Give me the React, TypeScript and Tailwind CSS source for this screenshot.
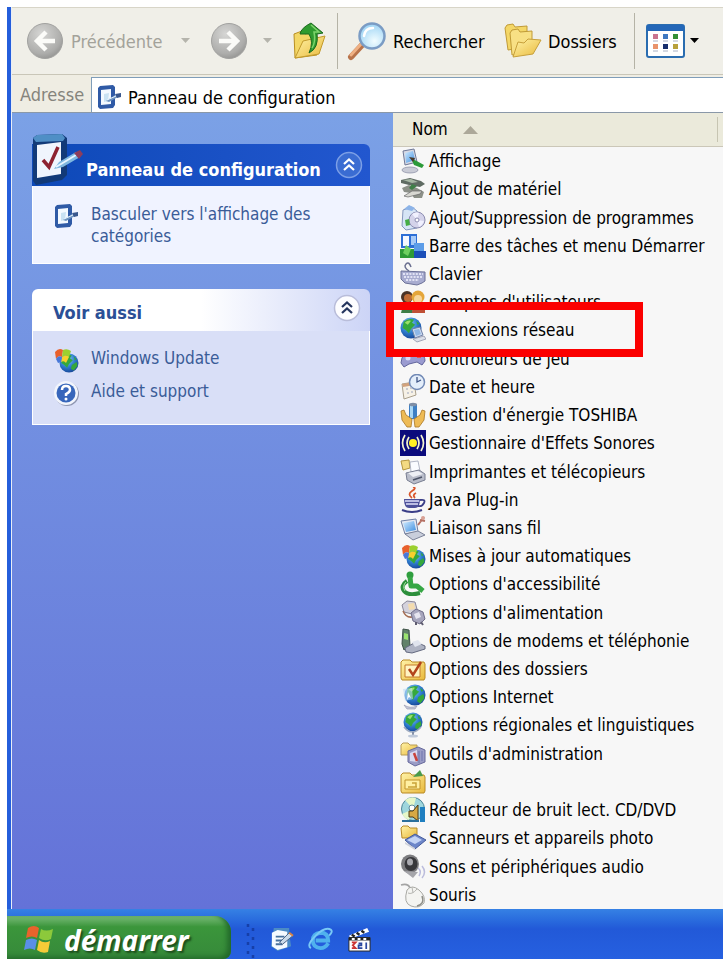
import type { ReactNode } from "react";

const Svg = ({ children, className = "size-[26px]", box = "0 0 26 26" }: { children: ReactNode; className?: string; box?: string }) => (
  <svg viewBox={box} className={`shrink-0 ${className}`} aria-hidden="true">
    {children}
  </svg>
);

/* ---- Shared drawing parts ---- */

const Defs = () => (
  <svg className="absolute size-0" aria-hidden="true">
    <defs>
      <radialGradient id="ocean" cx="0.4" cy="0.3" r="0.8">
        <stop offset="0" stopColor="#8fd0f5" />
        <stop offset="0.5" stopColor="#2f7fd0" />
        <stop offset="1" stopColor="#123a8c" />
      </radialGradient>
      <linearGradient id="folder" x1="0" y1="0" x2="1" y2="1">
        <stop offset="0" stopColor="#fff3a8" />
        <stop offset="1" stopColor="#e9b93c" />
      </linearGradient>
      <radialGradient id="grayBall" cx="0.4" cy="0.3" r="0.8">
        <stop offset="0" stopColor="#d6d6d4" />
        <stop offset="0.7" stopColor="#adadab" />
        <stop offset="1" stopColor="#8c8c8a" />
      </radialGradient>
      <linearGradient id="screen" x1="0" y1="0" x2="1" y2="1">
        <stop offset="0" stopColor="#d3ecff" />
        <stop offset="1" stopColor="#3f8fe0" />
      </linearGradient>
      <radialGradient id="lens" cx="0.6" cy="0.7" r="0.7">
        <stop offset="0" stopColor="#f2fdff" />
        <stop offset="1" stopColor="#9ed4f5" />
      </radialGradient>
    </defs>
  </svg>
);

const Globe = ({ cx, cy, r }: { cx: number; cy: number; r: number }) => (
  <g transform={`translate(${cx} ${cy}) scale(${r / 10})`}>
    <circle r="10" fill="url(#ocean)" />
    <path d="M-7-6Q-2-10 3-8L1-5 4-3 0 1-2 5-5 2-8 0ZM3 2L8-1 9 3 5 8 2 6ZM5-7L8-4 6-3Z" fill="#35a83c" />
    <path d="M-6-5Q-3-8 0-7L-3-3Z" fill="#9be06a" />
  </g>
);

const Flag = () => (
  <g>
    <path d="M2 5Q6 0 10 3L9 10Q5 8 3 12Z" fill="#e8602c" />
    <path d="M10 3Q14 1 18 4L16 10Q13 7 9 10Z" fill="#9bd02f" />
    <path d="M9 10Q13 7 16 10L13 16Q11 13 8 15Z" fill="#f7cf2d" />
    <path d="M3 12Q5 8 9 10L8 15 5 16Z" fill="#4878d8" />
  </g>
);

const Panel = () => (
  <g>
    <path d="M2 4L4 2 17 1 19 3V21L17 24 4 25 2 23Z" fill="#2f5aa6" />
    <path d="M5 6L15 5V20L5 21Z" fill="#f3f9ff" />
    <path d="M8 10L13 9 12 17 8 18Z" fill="#c9e2f3" />
    <path d="M10 17L19 11 22 13 13 18Z" fill="#6d93bf" />
    <path d="M19 10L25 9 25 13 21 14Z" fill="#39578d" />
    <path d="M11 16L20 12" stroke="#e7f3ff" strokeWidth="1" />
  </g>
);

const FolderShape = () => (
  <path d="M1 6L3 4H10L12 6H24L25 8V22L24 24H2L1 22Z" fill="url(#folder)" stroke="#b98a25" />
);

/* ---- Control panel item icons ---- */

const icons: Record<string, ReactNode> = {
  display: (
    <>
      <ellipse cx="10" cy="22" rx="8" ry="3" fill="#c9cbd6" stroke="#858aa0" strokeWidth=".7" />
      <path d="M3 3L14 1 17 14 5 17Z" fill="#d7d9e4" stroke="#6f7896" />
      <path d="M5 5L13 3 15 12 6 15Z" fill="url(#screen)" />
      <path d="M11 10L24 17 22 20 14 17Z" fill="#2b9a38" />
      <path d="M9 9L15 10 13 14Z" fill="#4b3a2a" />
    </>
  ),
  hardware: (
    <>
      <path d="M1 4L10 2 21 5 25 8 20 11 9 9 1 7Z" fill="#5f6b63" />
      <path d="M3 4L11 3 18 6 12 7Z" fill="#a7b8a5" />
      <path d="M2 12L9 9 17 12 24 16 22 22 14 22 11 17 4 16Z" fill="#8c9088" />
      <path d="M4 20L12 15 22 15 20 18 8 21Z" fill="#d8d8d2" stroke="#666" strokeWidth=".7" />
      <path d="M12 8L17 10 12 14 9 12Z" fill="#3f7f48" />
    </>
  ),
  programs: (
    <>
      <path d="M3 5L12 2 17 6V23L6 25 2 21Z" fill="#d6e5f6" stroke="#8597bd" />
      <path d="M4 4L9 0 15 3 12 6Z" fill="#8db4e8" />
      <circle cx="17" cy="15" r="8" fill="#d4d3ea" stroke="#8c8cb0" />
      <path d="M17 15L12 9Q16 6 19 8ZM17 15L24 16Q22 21 19 22Z" fill="#f1f1ff" />
      <circle cx="17" cy="15" r="2" fill="#fff" stroke="#8c8cb0" />
      <path d="M5 15L9 14 10 20 6 21Z" fill="#46ad45" />
    </>
  ),
  taskbar: (
    <>
      <path d="M1 1H17V15H1Z" fill="#2d6fd6" />
      <path d="M3 3H9V13H3Z" fill="#f4f8ff" />
      <path d="M11 3H16V12H11Z" fill="#a8cbf7" />
      <path d="M14 10H24V19H14Z" fill="#5d9de8" />
      <path d="M0 16H14V25H0Z" fill="#2f9a37" />
      <path d="M14 18H26V25H14Z" fill="#1c4fb8" />
      <path d="M6 12L11 16 8 23 3 20Z" fill="#6ed060" />
    </>
  ),
  keyboard: (
    <>
      <path d="M9 10Q3 6 6 3T11 6" fill="none" stroke="#6b7090" strokeWidth="1.5" />
      <path d="M1 10L25 11V20L22 22 17 24 5 22 1 18Z" fill="#a8acd0" stroke="#6c7198" />
      <path d="M3 13H23M4 16H22M6 19H19" stroke="#f3f4ff" strokeWidth="1.6" strokeDasharray="2 1.2" />
    </>
  ),
  users: (
    <>
      <circle cx="7" cy="8" r="6" fill="#4b3326" />
      <circle cx="8" cy="9" r="4" fill="#c06c36" />
      <circle cx="18" cy="8" r="6.500" fill="#e5a63a" />
      <circle cx="18" cy="10" r="4" fill="#f8d69b" />
      <path d="M1 24Q2 14 12 15L13 24Z" fill="#3e7d45" />
      <path d="M12 24Q12 15 19 15T25 24Z" fill="#bf4f35" />
    </>
  ),
  network: (
    <>
      <Globe cx={11} cy={11} r={10.5} />
      <path d="M12 12L20 10 23 18 15 21Z" fill="#cbd8ee" stroke="#6d80a8" />
      <path d="M14 13L19 12 21 17 16 19Z" fill="#8fb7e6" />
      <path d="M13 22L24 19 26 22 17 25Z" fill="#dcdfe9" stroke="#8489a0" strokeWidth=".7" />
    </>
  ),
  games: (
    <>
      <path d="M2 12Q4 7 10 9L20 8Q25 9 25 15L22 19 17 16 9 18 4 21 1 17Z" fill="#9a9bd0" stroke="#62659c" />
      <circle cx="8" cy="12" r="2.500" fill="#dadbf5" />
      <path d="M17 11H21" stroke="#e5564a" strokeWidth="2" />
    </>
  ),
  clock: (
    <>
      <path d="M2 10L14 8 16 21 4 25Z" fill="#f6f1e6" stroke="#aaa08c" />
      <path d="M2 10L14 8 15 11 3 13Z" fill="#d2a27c" />
      <circle cx="17" cy="8" r="7.500" fill="#e4eefa" stroke="#7189b5" strokeWidth="1.500" />
      <path d="M17 3V8L21 6" fill="none" stroke="#3d5485" strokeWidth="1.300" />
      <path d="M6 15H8M10 14H12M7 19H9M11 18H13" stroke="#b9bdca" strokeWidth="1.500" />
    </>
  ),
  toshiba: (
    <>
      <path d="M9 2H17V17H9Z" fill="#3d7fc4" />
      <path d="M10 3H13V16H10Z" fill="#a9d8f6" />
      <ellipse cx="13" cy="2.500" rx="4" ry="1.800" fill="#7f8ea5" />
      <path d="M1 9L4 8 6 13 12 17 11 25H7L2 18Z" fill="#eebb55" stroke="#a97724" strokeWidth=".8" />
      <path d="M25 9L22 8 20 13 14 17 15 25H19L24 18Z" fill="#eebb55" stroke="#a97724" strokeWidth=".8" />
    </>
  ),
  sound: (
    <>
      <path d="M0 0H26V26H0Z" fill="#0b0b7c" />
      <circle cx="13" cy="13" r="4" fill="#ffee22" />
      <path d="M9 7Q5 13 9 19M17 7Q21 13 17 19M5 5Q0 13 5 21M21 5Q26 13 21 21" fill="none" stroke="#f4f4d0" strokeWidth="1.700" />
    </>
  ),
  printer: (
    <>
      <path d="M1 2L9 1 10 9 3 11Z" fill="#f3da83" stroke="#b5963f" />
      <path d="M10 3L18 2 20 12 11 13Z" fill="#fafcff" stroke="#a0a6b8" strokeWidth=".8" />
      <path d="M6 14L19 11 25 15V21L14 25 7 21Z" fill="#b9bdca" stroke="#797f92" />
      <path d="M8 14L18 12 23 15 13 18Z" fill="#eef0f5" />
      <path d="M13 21L22 18" stroke="#4b5367" strokeWidth="1.500" />
    </>
  ),
  java: (
    <>
      <path d="M12 11Q7 7 12 4T13 0M15 11Q12 8 16 6" fill="none" stroke="#d9562b" strokeWidth="1.800" />
      <path d="M4 12H20Q20 21 15 21H9Q4 21 4 12Z" fill="#4d519a" />
      <path d="M5 14H19M6 17H18" stroke="#dfe1fa" strokeWidth="1.300" />
      <path d="M20 13Q26 12 24 16T18 19" fill="none" stroke="#3b3f88" strokeWidth="1.800" />
      <path d="M2 23Q12 27 22 23" fill="none" stroke="#3b3f88" strokeWidth="2" />
    </>
  ),
  wireless: (
    <>
      <path d="M1 6L16 4 18 17 5 19Z" fill="#e4e8f2" stroke="#7080a4" />
      <path d="M3 8L14 6 16 15 6 17Z" fill="url(#screen)" />
      <path d="M5 19L18 16 25 20 13 25Z" fill="#c9cedb" stroke="#7b8298" />
      <path d="M18 10L24 2M20 5L25 6" stroke="#b46f62" strokeWidth="2" />
      <circle cx="23" cy="3" r="2" fill="#d9a296" />
    </>
  ),
  update: (
    <>
      <Globe cx={16} cy={16} r={9.5} />
      <Flag />
    </>
  ),
  access: (
    <>
      <circle cx="10" cy="4" r="3.500" fill="#2f9e3f" />
      <path d="M10 6L11 15H17L23 20" fill="none" stroke="#37a745" strokeWidth="5" strokeLinejoin="round" />
      <path d="M7 10Q0 15 4 20T20 22" fill="none" stroke="#2c8f3b" strokeWidth="4" />
      <path d="M6 11Q2 15 5 20" fill="none" stroke="#a4e59f" strokeWidth="1" />
    </>
  ),
  power: (
    <>
      <path d="M2 5L7 1 15 2 17 9 12 14 4 12Z" fill="#d4d2dc" stroke="#8a8798" />
      <path d="M8 4L14 3 15 9 9 10Z" fill="#f4dcae" />
      <path d="M3 11Q6 18 12 17" fill="none" stroke="#a56d52" strokeWidth="1.500" />
      <path d="M11 13L16 9 23 12 25 19 20 24 13 21Z" fill="#a7a6bd" stroke="#6f6d89" />
      <path d="M14 14L19 12 21 17 16 19Z" fill="#e6e5f0" />
      <path d="M16 22V25M21 22L23 25" stroke="#5e5c70" strokeWidth="2" />
    </>
  ),
  modem: (
    <>
      <path d="M3 1L9 2 10 18 4 22 2 16Z" fill="#62826a" stroke="#3d5146" />
      <path d="M4 5L8 6V12L4 11Z" fill="#9be36f" />
      <path d="M5 20L16 14 25 18V21L12 25 6 24Z" fill="#aeb3c3" stroke="#646a80" />
      <path d="M12 14L18 12 22 16 15 19Z" fill="#e0e4ee" />
    </>
  ),
  folderOptions: (
    <>
      <FolderShape />
      <path d="M5 9H20V21H5Z" fill="#fff4c2" stroke="#c47b2a" />
      <path d="M9 13L13 19 21 6" fill="none" stroke="#b3441c" strokeWidth="2.500" />
    </>
  ),
  internet: (
    <>
      <Globe cx={15} cy={11} r={10.5} />
      <path d="M3 5L12 4 13 15 5 17Z" fill="#bcdcf7" opacity=".6" />
      <path d="M8 8L11 14 9 13 7 16Z" fill="#fff" />
      <path d="M4 21Q10 25 17 22L15 25 7 25Z" fill="#c6c9da" stroke="#8e92aa" strokeWidth=".6" />
    </>
  ),
  regional: (
    <>
      <Globe cx={13} cy={10} r={9.5} />
      <path d="M4 15Q12 25 21 15" fill="none" stroke="#9ba9c0" strokeWidth="1.500" />
      <path d="M13 20V23" stroke="#8491a9" strokeWidth="2" />
      <ellipse cx="13" cy="24" rx="5" ry="1.500" fill="#bfc9d9" />
    </>
  ),
  admin: (
    <>
      <path d="M1 4L3 2H8L10 4H17V14H1Z" fill="url(#folder)" stroke="#b79b55" />
      <path d="M8 10L18 6 25 9V21L15 25 8 21Z" fill="#9a9cc6" stroke="#66699b" />
      <path d="M10 12L17 9V21L10 20Z" fill="#d9daf1" />
      <path d="M14 12L17 20" stroke="#c8443d" strokeWidth="2.500" />
      <path d="M19 10V22M22 10V20" stroke="#6f75ad" />
    </>
  ),
  fonts: (
    <>
      <FolderShape />
      <path d="M13 8L20 1 23 7Z" fill="#4a9a4b" />
      <path d="M5 11H20V20H5Z" fill="#fff0a2" stroke="#c1942a" />
      <path d="M8 18H17M12 14H16V18" fill="none" stroke="#c9a238" strokeWidth="1.500" />
    </>
  ),
  cd: (
    <>
      <circle cx="13" cy="12" r="11.500" fill="#9ed6dd" stroke="#4f8798" />
      <path d="M13 12L5 3Q11-1 16 1ZM13 12L2 17Q5 22 9 23Z" fill="#e6f7c8" />
      <circle cx="12" cy="11" r="3" fill="#fff" stroke="#5e8b9c" />
      <path d="M9 14L13 14 18 8V24L13 20H9Z" fill="#d7a944" stroke="#4b3a18" />
      <path d="M20 10H25V25H20Z" fill="#1f7fc0" />
      <path d="M2 24H19" stroke="#2b6f9c" strokeWidth="2" />
    </>
  ),
  scanner: (
    <>
      <path d="M1 3L3 1H8L10 3H17V13H2Z" fill="url(#folder)" stroke="#b98a25" />
      <path d="M5 15L15 9 26 15 15 24Z" fill="#6d86c9" stroke="#445b9c" />
      <path d="M7 15L15 11 22 15 15 19Z" fill="#c4d4f5" />
      <path d="M5 17L15 23V25L5 19Z" fill="#cfd2dc" />
    </>
  ),
  speaker: (
    <>
      <ellipse cx="10" cy="10" rx="9" ry="9.500" fill="#7d7d80" />
      <ellipse cx="11" cy="10" rx="6.500" ry="7" fill="#37373b" />
      <ellipse cx="10" cy="8" rx="3" ry="3.500" fill="#aaaab0" />
      <path d="M4 17L13 24 18 18Z" fill="#a5a5aa" />
      <path d="M18 14Q22 17 19 22M22 12Q27 18 22 24" fill="none" stroke="#bbbcdc" strokeWidth="1.500" />
    </>
  ),
  mouse: (
    <>
      <path d="M10 6Q8 1 1 3" fill="none" stroke="#a4a4a4" strokeWidth="1.800" />
      <path d="M7 8Q12 2 19 8T24 21Q19 27 11 24T7 8Z" fill="#f4f4f1" stroke="#a9a9a4" />
      <path d="M8 11Q12 13 17 7M12 5L13 11" fill="none" stroke="#b6b6b2" />
      <path d="M22 14Q25 22 17 24" fill="none" stroke="#8d8d87" strokeWidth="1.500" />
    </>
  ),
};

const items: [string, string][] = [
  ["display", "Affichage"],
  ["hardware", "Ajout de matériel"],
  ["programs", "Ajout/Suppression de programmes"],
  ["taskbar", "Barre des tâches et menu Démarrer"],
  ["keyboard", "Clavier"],
  ["users", "Comptes d'utilisateurs"],
  ["network", "Connexions réseau"],
  ["games", "Contrôleurs de jeu"],
  ["clock", "Date et heure"],
  ["toshiba", "Gestion d'énergie TOSHIBA"],
  ["sound", "Gestionnaire d'Effets Sonores"],
  ["printer", "Imprimantes et télécopieurs"],
  ["java", "Java Plug-in"],
  ["wireless", "Liaison sans fil"],
  ["update", "Mises à jour automatiques"],
  ["access", "Options d'accessibilité"],
  ["power", "Options d'alimentation"],
  ["modem", "Options de modems et téléphonie"],
  ["folderOptions", "Options des dossiers"],
  ["internet", "Options Internet"],
  ["regional", "Options régionales et linguistiques"],
  ["admin", "Outils d'administration"],
  ["fonts", "Polices"],
  ["cd", "Réducteur de bruit lect. CD/DVD"],
  ["scanner", "Scanneurs et appareils photo"],
  ["speaker", "Sons et périphériques audio"],
  ["mouse", "Souris"],
];

/* ---- Toolbar ---- */

const Arrow = ({ flip = false }: { flip?: boolean }) => (
  <Svg className="size-[38px]" box="0 0 38 38">
    <circle cx="19" cy="19" r="17.500" fill="url(#grayBall)" stroke="#a2a2a0" />
    <path
      d={flip ? "M9 19H27M18 10L27 19L18 28" : "M29 19H11M20 10L11 19L20 28"}
      fill="none"
      stroke="#fbfbf8"
      strokeWidth="4.500"
    />
  </Svg>
);

const Caret = ({ className }: { className: string }) => (
  <Svg className={`h-[6px] w-[9px] ${className}`} box="0 0 9 6">
    <path d="M0 0H9L4.500 5Z" fill="currentColor" />
  </Svg>
);

const Separator = () => <div className="h-[56px] w-px shrink-0 bg-[#b5b3a6]" />;

const Toolbar = () => (
  <div className="flex h-[68px] shrink-0 items-center overflow-hidden border-y border-t-[#d8d5c8] border-b-[#c9c6b8] bg-[#f0efe8] pl-[14px] text-[18px]">
    <button className="flex w-[164px] shrink-0 items-center gap-[7px] text-[#a3a29a]">
      <Arrow />
      <span className="grow text-left">Précédente</span>
      <Caret className="text-[#b5b4ac]" />
    </button>
    <button className="ml-[20px] flex shrink-0 items-center gap-[15px]" aria-label="Suivante">
      <Arrow flip />
      <Caret className="text-[#b5b4ac]" />
    </button>
    <button className="ml-[20px] shrink-0" aria-label="Dossier parent">
      <Svg className="h-[38px] w-[34px]" box="0 0 34 38">
        <path d="M2 12L10 9 13 12 23 9 25 14V33L3 36Z" fill="#f3d766" stroke="#b98f22" />
        <path d="M3 36L11 19 33 14 27 32Z" fill="url(#folder)" stroke="#c29a2c" />
        <path d="M8 12Q9 6 19 1L31 11 25 12Q27 26 17 31Q22 20 17 12Z" fill="#2f9b2f" stroke="#1c6a1e" />
        <path d="M19 3L27 10H22Q24 20 20 26" fill="none" stroke="#7ed36c" strokeWidth="1.500" />
      </Svg>
    </button>
    <div className="ml-[11px]">
      <Separator />
    </div>
    <button className="ml-[9px] flex w-[137px] shrink-0 items-center gap-[6px]">
      <Svg className="size-[40px]" box="0 0 40 40">
        <path d="M4 36L16 23" stroke="#b8734a" strokeWidth="6" strokeLinecap="round" />
        <path d="M4 34L15 22" stroke="#efb083" strokeWidth="3" strokeLinecap="round" />
        <circle cx="25" cy="15" r="12.500" fill="url(#lens)" stroke="#7b9cc4" strokeWidth="2.500" />
        <path d="M17 15Q18 7 26 7" fill="none" stroke="#fff" strokeWidth="2.500" strokeLinecap="round" />
      </Svg>
      Rechercher
    </button>
    <button className="ml-[20px] flex w-[112px] shrink-0 items-center gap-[6px]">
      <Svg className="h-[36px] w-[38px]" box="0 0 38 36">
        <path d="M1 5L3 2 9 1 11 4 23 3V24L4 27Z" fill="#f4d767" stroke="#c09a36" />
        <path d="M6 10L8 7 14 6 16 9 28 8V29L8 32Z" fill="#f8e084" stroke="#c09a36" />
        <path d="M9 34L14 19 20 20 24 16 37 17 29 31Z" fill="url(#folder)" stroke="#c7a03b" />
      </Svg>
      Dossiers
    </button>
    <div className="ml-[18px]">
      <Separator />
    </div>
    <button className="ml-[11px] flex shrink-0 items-center gap-[5px]" aria-label="Affichages">
      <Svg className="h-[34px] w-[39px]" box="0 0 39 34">
        <rect x="1" y="1" width="37" height="32" rx="2" fill="#fff" stroke="#2a6db0" strokeWidth="2" />
        <path d="M1 1H38V7H1Z" fill="#2467b8" />
        <path d="M7 10H12V15H7Z" fill="#c9748f" />
        <path d="M17 10H22V15H17Z" fill="#3f78c0" />
        <path d="M27 10H32V15H27Z" fill="#348f35" />
        <path d="M7 20H12V25H7Z" fill="#e9936b" />
        <path d="M17 20H22V25H17Z" fill="#182f6d" />
        <path d="M27 20H32V25H27Z" fill="#b8a13b" />
        <path d="M7 17H12M17 17H22M27 17H32M7 27H12M17 27H22M27 27H32" stroke="#aab2c4" />
      </Svg>
      <Caret className="text-black" />
    </button>
  </div>
);

/* ---- Side pane ---- */

const Chevrons = ({ light = false }: { light?: boolean }) => (
  <Svg className="size-[28px]" box="0 0 28 28">
    <circle cx="14" cy="14" r="12.500" fill={light ? "#fdfdff" : "#3a6cd2"} stroke={light ? "#b9bdda" : "#7c9fe6"} strokeWidth="1.500" />
    <path d="M9 13L14 8.500 19 13M9 19L14 14.500 19 19" fill="none" stroke={light ? "#26365f" : "#fff"} strokeWidth="2.200" />
  </Svg>
);

const TaskLink = ({ icon, children }: { icon: ReactNode; children: ReactNode }) => (
  <a href="#" className="flex items-start gap-3 leading-[22px] text-[#3a5c98]">
    {icon}
    <span>{children}</span>
  </a>
);

const SidePane = () => (
  <aside className="flex w-[381px] shrink-0 flex-col gap-[25px] bg-linear-to-b from-[#7ba1e6] to-[#6472d8] pt-[31px] pr-[23px] pl-5">
    <section>
      <h2 className="relative flex h-[42px] items-center justify-between rounded-tr-md bg-linear-to-r from-[#0d49b8] to-[#2257cf] pr-[7px] pl-[54px] text-[18px] font-bold text-white">
        <Svg className="absolute -top-[11px] left-0 h-[52px] w-[52px]" box="0 0 52 52">
          <path d="M1 5L5 2 30 1 35 5V42L30 47 4 52 1 48Z" fill="#123a78" />
          <path d="M1 5L5 2 30 1 33 5 31 8 4 9Z" fill="#4f8fc6" />
          <path d="M5 12L29 9V41L5 45Z" fill="#f0f5fd" />
          <path d="M11 27L17 34 26 14" fill="none" stroke="#8d2230" strokeWidth="3.500" />
          <path d="M22 36L27 29 44 19 48 24 31 34Z" fill="#7fb8e0" />
          <path d="M24 34L44 22" stroke="#e7f5ff" strokeWidth="2" />
          <path d="M42 20L48 17 51 21 47 26Z" fill="#8d3d5c" />
        </Svg>
        <span className="pt-2">Panneau de configuration</span>
        <button aria-label="Réduire Panneau de configuration">
          <Chevrons />
        </button>
      </h2>
      <div className="border border-t-0 border-white bg-[#f0f3ff] px-5 pt-[17px] pb-[16px]">
        <TaskLink icon={<Svg><Panel /></Svg>}>
          Basculer vers l'affichage des
          <br />
          catégories
        </TaskLink>
      </div>
    </section>
    <section>
      <h2 className="flex h-[42px] items-center justify-between rounded-t-md bg-linear-to-r from-white from-50% to-[#ccd4f6] pr-[9px] pl-[21px] text-[18px] font-bold text-[#2a4f96]">
        <span className="pt-1">Voir aussi</span>
        <button className="pb-1" aria-label="Réduire Voir aussi">
          <Chevrons light />
        </button>
      </h2>
      <div className="flex flex-col gap-[7px] border border-t-0 border-white bg-[#d9dff7] px-5 pt-[16px] pb-[18px]">
        <TaskLink icon={<Svg>{icons.update}</Svg>}>Windows Update</TaskLink>
        <TaskLink
          icon={
            <Svg>
              <circle cx="14" cy="14" r="12" fill="#8d95b0" />
              <circle cx="13" cy="13" r="12" fill="#f2f5fc" />
              <circle cx="13" cy="13" r="9.500" fill="#3766bb" />
              <path d="M9 10Q9 6 13 6T17 10Q17 12 13 14V16" fill="none" stroke="#fff" strokeWidth="2.500" />
              <circle cx="13" cy="19" r="1.500" fill="#fff" />
            </Svg>
          }
        >
          Aide et support
        </TaskLink>
      </div>
    </section>
  </aside>
);

/* ---- Item list ---- */

const ItemList = () => (
  <main className="flex min-w-0 grow flex-col bg-[#f7f7f7]">
    <div className="flex h-[34px] shrink-0 items-stretch border-b border-[#cbc7b8] bg-[#ebeadb] py-1 pr-[5px]">
      <button className="flex grow items-center gap-[15px] border-r border-[#c7c5b2] pl-[19px]">
        Nom
        <Svg className="h-[8px] w-[15px]" box="0 0 15 8">
          <path d="M0 8L7.500 0 15 8Z" fill="#aca899" />
        </Svg>
      </button>
    </div>
    <ul className="flex grow flex-col pl-[7px]">
      {items.map(([icon, label]) => (
        <li key={label} className="relative flex min-h-[26px] flex-1 items-center">
          <a href="#" className="flex items-center gap-[3px] leading-[22px] whitespace-nowrap">
            <Svg>{icons[icon]}</Svg>
            {label}
          </a>
          {icon === "network" && (
            <div className="absolute -top-[14px] -bottom-3 -left-[14px] z-10 w-[257px] border-8 border-[#fb0000]" />
          )}
        </li>
      ))}
    </ul>
  </main>
);

/* ---- Taskbar ---- */

const Taskbar = () => (
  <footer className="flex h-[50px] shrink-0 bg-linear-to-b from-[#3681e4] from-0% via-[#2259d8] via-40% to-[#2660e0] pt-[7px]">
    <button className="flex w-[224px] shrink-0 items-center gap-[9px] rounded-tr-2xl rounded-br-lg bg-linear-to-b from-[#77bb77] via-[#3b963b] via-25% to-[#36893a] pt-1 pl-[17px] font-['Noto_Sans','Open_Sans',sans-serif] text-[28px] leading-[36px] font-bold text-white italic shadow-[inset_-4px_-2px_5px_#236a2b] [text-shadow:2px_2px_2px_#1c4d1c]">
      <Svg className="size-[31px]" box="0 0 31 31">
        <path d="M4 4Q10 0 15 4L13 14Q8 11 2 14Z" fill="#e9632c" />
        <path d="M17 5Q22 8 29 5L27 15Q21 18 15 14Z" fill="#8cc93b" />
        <path d="M2 16Q8 13 13 16L11 26Q6 23 0 26Z" fill="#5a8fe8" />
        <path d="M15 16Q20 20 26 17L24 28Q18 30 13 26Z" fill="#f6cb38" />
      </Svg>
      démarrer
    </button>
    <div className="ml-[15px] flex items-center gap-[14px] pt-1">
      <Svg className="h-[36px] w-[9px]" box="0 0 9 36">
        <path d="M2 2V36M7 6V36" stroke="#163fa8" strokeWidth="2.500" strokeDasharray="3 6" />
      </Svg>
      <button aria-label="Afficher le Bureau">
        <Svg className="size-[25px]">
          <path d="M5 1H21V7L23 20 9 25 2 20Z" fill="#4c8bc5" />
          <path d="M3 6L9 3 19 5V21L9 24 3 20Z" fill="#f5faff" />
          <path d="M7 10H16M7 14H14M7 18H14" stroke="#47719e" strokeWidth="2" />
          <path d="M11 16L21 6 25 9 14 18Z" fill="#cbdbea" stroke="#465f80" />
          <path d="M21 6L25 9" stroke="#d98243" strokeWidth="2" />
        </Svg>
      </button>
      <button aria-label="Internet Explorer">
        <Svg className="size-[25px]">
          <path d="M21 17Q18 22 13 22Q5 21 5 14T13 6Q21 6 21 14H8" fill="none" stroke="#4fb1ee" strokeWidth="4" />
          <path d="M3 22Q-2 19 8 9T24 3Q26 5 22 9" fill="none" stroke="#79c9f5" strokeWidth="2" />
        </Svg>
      </button>
      <button aria-label="Lecteur vidéo">
        <Svg className="size-[25px]">
          <path d="M2 9L21 1 23 5 4 12Z" fill="#fff" />
          <path d="M5 8L8 10M10 6L13 8M15 4L18 6" stroke="#222" strokeWidth="2.500" />
          <path d="M2 11H24V25H2Z" fill="#fff" stroke="#222" />
          <path d="M2 11H24V14H2Z" fill="#222" />
          <path d="M5 12.500H22" stroke="#fff" strokeWidth="2" strokeDasharray="3 3" />
          <path d="M5 16H9L6 19 9 22H5" fill="none" stroke="#c33" strokeWidth="1.800" />
          <path d="M12 17H15V19H12V22H16M20 16V23" fill="none" stroke="#2b48a0" strokeWidth="1.800" />
        </Svg>
      </button>
    </div>
  </footer>
);

export default function App() {
  return (
    <div className="flex min-h-screen flex-col bg-white pt-[7px] pb-[5px] pl-[7px] font-['DejaVu_Sans_Condensed','DejaVu_Sans',sans-serif] text-[17px] text-black">
      <Defs />
      <div className="flex grow flex-col border-l-4 border-[#245edb]">
        <div className="flex grow flex-col border-l border-[#e8edf7]">
          <Toolbar />
          <div className="flex h-[38px] shrink-0 items-stretch border-b border-[#8a98a8] bg-[#efede3] pt-[2px] text-[18px]">
            <label htmlFor="address" className="flex w-[79px] shrink-0 items-center pl-2 text-[#85847c]">
              Adresse
            </label>
            <div className="flex min-w-0 grow items-center gap-[6px] border-t border-l border-[#7f9db9] bg-white pt-1 pl-[4px]">
              <Svg>
                <Panel />
              </Svg>
              <input id="address" defaultValue="Panneau de configuration" className="min-w-0 grow bg-transparent outline-none" />
            </div>
          </div>
          <div className="flex grow">
            <SidePane />
            <ItemList />
          </div>
        </div>
      </div>
      <Taskbar />
    </div>
  );
}
